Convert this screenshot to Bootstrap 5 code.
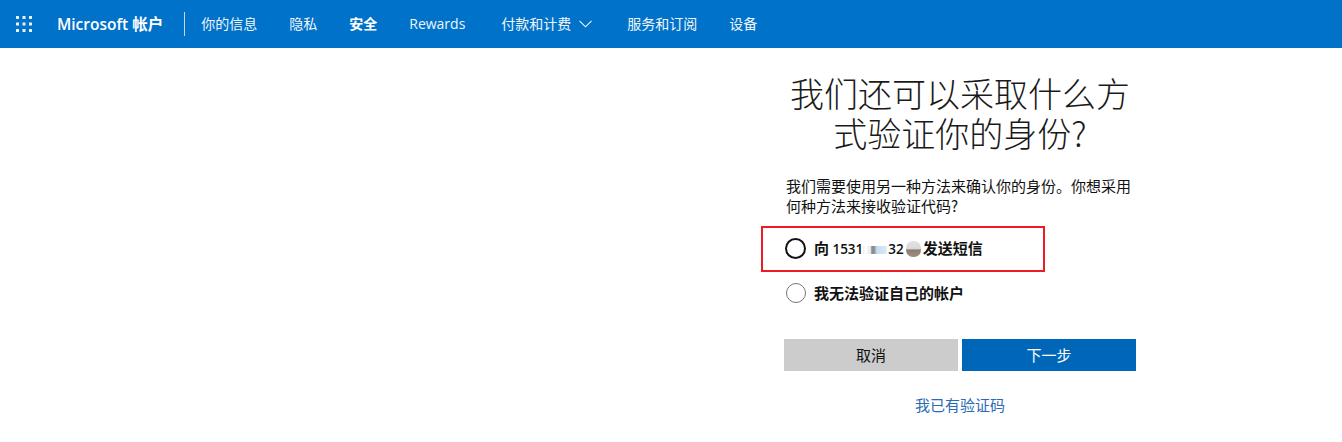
<!DOCTYPE html>
<html lang="zh-CN">
<head>
<meta charset="utf-8">
<title>Microsoft 帐户</title>
<link href="https://cdn.jsdelivr.net/npm/bootstrap@5.3.0/dist/css/bootstrap.min.css" rel="stylesheet">
<style>
html,body{height:100%;overflow:hidden}
body{font-family:"Noto Sans CJK SC","Liberation Sans",sans-serif;color:#111;background:#fff}
.topbar{height:48px;background:#0072c9;color:#fff;padding-left:16px;font-size:14px}
.waffle{width:16px;height:16px;margin-right:25px}
.brandname{font-family:"Open Sans","Noto Sans CJK SC",sans-serif;font-weight:600;font-size:15.5px;color:#fff;padding-right:21px;border-right:1px solid #c9d6e2;line-height:24px;text-decoration:none}
.navlist{margin-left:16px;gap:32px;padding-bottom:2px}
.navlist a{color:#f0f6fb;text-decoration:none;font-size:14px;line-height:20px;white-space:nowrap}
.navlist a.current{font-weight:700;color:#fff}
.navlist .latin{font-family:"Open Sans",sans-serif;margin-top:2px}
.navlist .paygroup{margin:0 3px 0 4px}
.paygroup svg{margin-left:8px;vertical-align:1px}
.panel{width:352px;margin-left:784px;padding-top:25px}
.headline{font-size:34px;line-height:40px;font-weight:200;text-align:center;margin:0 0 23px;padding:0 2px;color:#1a1a1a}
.prompt{font-size:15px;line-height:20px;margin:0 0 9px;padding-left:2px}
.choices{position:relative;padding-left:2px;padding-top:13px}
.choice{margin:0;padding:0;min-height:20px;gap:8px;font-size:15px;font-weight:700;line-height:20px}
.choice+.choice{margin-top:24px}
.choice .form-check-input{float:none;margin:0;width:20px;height:20px;border:1px solid #777;flex:none;box-shadow:none}
.choice.focused .form-check-input{border:2px solid #111;width:21px;height:21px;margin:0 0 0 -1px}
.digits{font-family:"Open Sans",sans-serif;font-weight:600;font-size:13.5px}
.smear{display:inline-block;height:8px;width:25px;vertical-align:0;background:linear-gradient(90deg,#fbe8df 0,#fff 10%,#e3e7ec 30%,#8e8e8e 35%,#8e8e8e 45%,#c6dcf0 55%,#d8e6f4 90%,#fff 100%)}
.smear2{display:inline-block;width:15px;height:16px;vertical-align:-3px;margin:0 2px 0 2px;border-radius:45%;background:linear-gradient(180deg,#e2e2e2 0,#d9d9d9 50%,#8f7a70 55%,#a08d82 100%)}
.redmark{position:absolute;left:-23px;top:1px;width:284px;height:46px;border:2px solid #ed1c24;pointer-events:none}
.actions{gap:4px;margin-top:36px}
.actions .btn{flex:1 1 0;height:32px;border-radius:0;border:0;font-size:15px;line-height:32px;padding:0}
.btn.cancelbtn{background:#ccc;color:#111}
.btn.nextbtn{background:#0067b8;color:#fff}
.codelink{display:block;text-align:center;margin-top:23px;font-size:15px;line-height:22px;color:#2a6bb5;text-decoration:none}
</style>
</head>
<body>
<nav class="topbar d-flex align-items-center">
  <svg class="waffle" viewBox="0 0 16 16" fill="#e8f1f8" aria-hidden="true">
    <rect x="0" y="0" width="3" height="3"/><rect x="6.5" y="0" width="3" height="3"/><rect x="13" y="0" width="3" height="3"/>
    <rect x="0" y="6.5" width="3" height="3"/><rect x="6.5" y="6.5" width="3" height="3"/><rect x="13" y="6.5" width="3" height="3"/>
    <rect x="0" y="13" width="3" height="3"/><rect x="6.5" y="13" width="3" height="3"/><rect x="13" y="13" width="3" height="3"/>
  </svg>
  <a class="brandname" href="#">Microsoft 帐户</a>
  <div class="navlist d-flex align-items-center">
    <a href="#">你的信息</a>
    <a href="#">隐私</a>
    <a href="#" class="current">安全</a>
    <a href="#" class="latin">Rewards</a>
    <a href="#" class="paygroup">付款和计费<svg width="13" height="8" viewBox="0 0 13 8" fill="none" stroke="#f0f6fb" stroke-width="1.1"><path d="M.5.8 6.5 6.8 12.5.8"/></svg></a>
    <a href="#">服务和订阅</a>
    <a href="#">设备</a>
  </div>
</nav>
<main class="panel">
  <h1 class="headline">我们还可以采取什么方式验证你的身份?</h1>
  <p class="prompt">我们需要使用另一种方法来确认你的身份。你想采用何种方法来接收验证代码?</p>
  <div class="choices">
    <label class="choice focused form-check d-flex align-items-center">
      <input class="form-check-input" type="radio" name="m">
      <span>向 <span class="digits">1531</span><span class="smear"></span><span class="digits">32</span><span class="smear2"></span>发送短信</span>
    </label>
    <label class="choice second form-check d-flex align-items-center">
      <input class="form-check-input" type="radio" name="m">
      <span>我无法验证自己的帐户</span>
    </label>
    <div class="redmark"></div>
  </div>
  <div class="actions d-flex">
    <button class="btn cancelbtn" type="button">取消</button>
    <button class="btn nextbtn" type="button">下一步</button>
  </div>
  <a class="codelink" href="#">我已有验证码</a>
</main>
<script src="https://cdn.jsdelivr.net/npm/bootstrap@5.3.0/dist/js/bootstrap.bundle.min.js"></script>
</body>
</html>
